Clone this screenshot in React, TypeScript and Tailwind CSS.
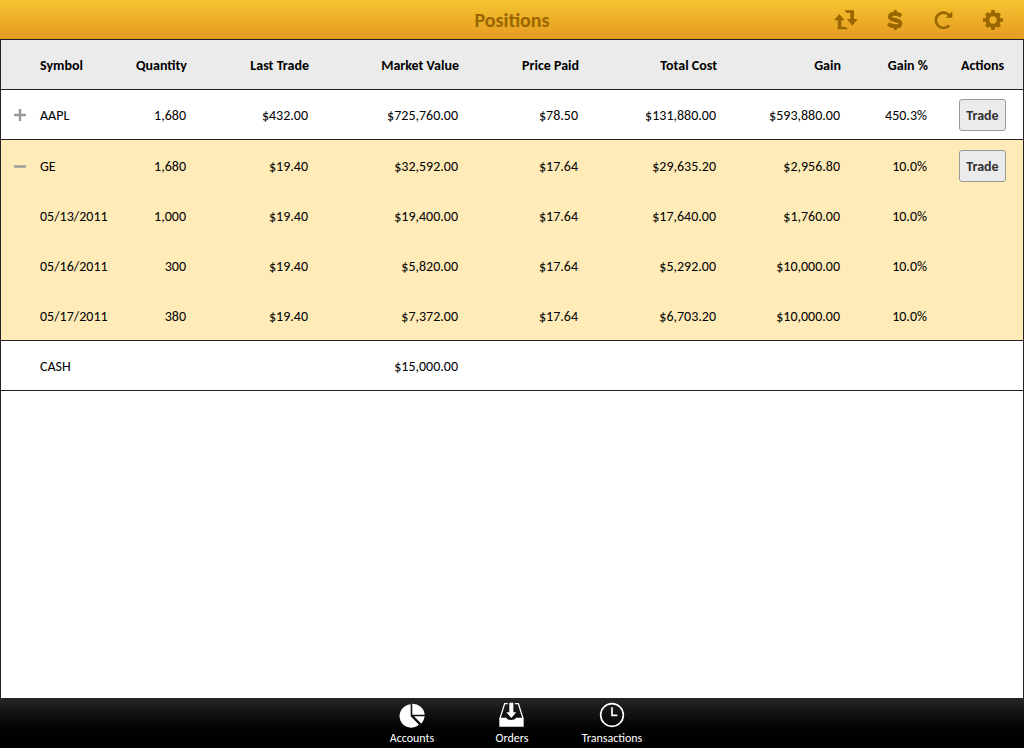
import { useState, type ReactNode } from "react";

type Lot = {
  name: string;
  values: string[];
};

type Position = Lot & {
  tradable: boolean;
  lots?: Lot[];
};

const columns = ["Quantity", "Last Trade", "Market Value", "Price Paid", "Total Cost", "Gain", "Gain %"];

const positions: Position[] = [
  {
    name: "AAPL",
    values: ["1,680", "$432.00", "$725,760.00", "$78.50", "$131,880.00", "$593,880.00", "450.3%"],
    tradable: true,
    lots: [],
  },
  {
    name: "GE",
    values: ["1,680", "$19.40", "$32,592.00", "$17.64", "$29,635.20", "$2,956.80", "10.0%"],
    tradable: true,
    lots: [
      { name: "05/13/2011", values: ["1,000", "$19.40", "$19,400.00", "$17.64", "$17,640.00", "$1,760.00", "10.0%"] },
      { name: "05/16/2011", values: ["300", "$19.40", "$5,820.00", "$17.64", "$5,292.00", "$10,000.00", "10.0%"] },
      { name: "05/17/2011", values: ["380", "$19.40", "$7,372.00", "$17.64", "$6,703.20", "$10,000.00", "10.0%"] },
    ],
  },
  {
    name: "CASH",
    values: ["", "", "$15,000.00", "", "", "", ""],
    tradable: false,
  },
];

function SwapIcon() {
  return (
    <svg viewBox="0 0 72 60" className="h-5 w-6" fill="currentColor" aria-hidden="true">
      <path d="M16 12 32 31H22V50H34L42 58H11V31H0Z" />
      <path d="M31 1H60V27H71L55 47 39 27H49V9H38Z" />
    </svg>
  );
}

function DollarIcon() {
  return (
    <svg viewBox="0 0 48 60" className="h-5 w-4" fill="none" stroke="currentColor" aria-hidden="true">
      <path d="M43 17C36 13 30 11 24 11C15 11 9 14 9 20C9 26 15 28 24 30C34 32 40 35 40 41C40 47 33 49 25 49C17 49 10 47 3 42" strokeWidth="12" />
      <path d="M25 0V12M25 49V60" strokeWidth="9" />
    </svg>
  );
}

function RefreshIcon() {
  return (
    <svg viewBox="0 0 60 60" className="size-5" fill="none" stroke="currentColor" aria-hidden="true">
      <path d="M46 16A23 23 0 1 0 46 46" strokeWidth="8" />
      <path d="M55 4V23H35Z" fill="currentColor" stroke="none" />
    </svg>
  );
}

function GearIcon() {
  return (
    <svg viewBox="0 0 60 60" className="size-5" fill="none" stroke="currentColor" aria-hidden="true">
      <circle cx="30" cy="30" r="17" strokeWidth="12" />
      <path d="M30 0V10M30 50V60M0 30H10M50 30H60M10 10 17 17M43 43 50 50M10 50 17 43M43 17 50 10" strokeWidth="11" />
    </svg>
  );
}

function PieIcon() {
  return (
    <svg viewBox="0 0 81 78" className="h-[26px] w-[27px]" fill="currentColor" aria-hidden="true">
      <path d="M35 7A35 35 0 1 0 60 68L35 43Z" />
      <path d="M40 5A36 36 0 0 1 77 38H40Z" />
      <path d="M45 43H77A36 36 0 0 1 67 65Z" />
    </svg>
  );
}

function TrayIcon() {
  return (
    <svg viewBox="0 0 78 78" className="size-[26px]" fill="currentColor" aria-hidden="true">
      <path d="M1 47H22C25 56 48 56 51 47H74V74H1Z" />
      <path d="M26 5H17L3 49M48 5H58L72 49" fill="none" stroke="currentColor" strokeWidth="4" />
      <path d="M31 2H43V31H52L37 48 22 31H31Z" />
    </svg>
  );
}

function ClockIcon() {
  return (
    <svg viewBox="0 0 78 78" className="size-[26px]" fill="none" stroke="currentColor" strokeWidth="5" aria-hidden="true">
      <circle cx="39" cy="39" r="34" />
      <path d="M39 16V40H55" />
    </svg>
  );
}

function ToolButton({ label, children }: { label: string; children: ReactNode }) {
  return (
    <button type="button" aria-label={label} className="flex h-6 w-6 cursor-pointer items-center justify-center">
      {children}
    </button>
  );
}

function NavLink({ label, children }: { label: string; children: ReactNode }) {
  return (
    <a href="#" className="flex w-[100px] flex-col items-center gap-0.5 pt-1">
      {children}
      <span className="text-xs leading-4">{label}</span>
    </a>
  );
}

function ValueCells({ values, line }: { values: string[]; line: string }) {
  return (
    <>
      {values.map((value, i) => (
        <td key={i} className={`pt-0.5 pr-px text-right ${line}`}>
          {value}
        </td>
      ))}
    </>
  );
}

function PositionRows({ position, initiallyOpen }: { position: Position; initiallyOpen: boolean }) {
  const [open, setOpen] = useState(initiallyOpen);
  const lots = open && position.lots ? position.lots : [];
  const rule = "border-b border-[#222]";
  const line = lots.length ? "" : rule;

  return (
    <tbody className={open ? "bg-[#feebb8]" : "bg-white"}>
      <tr className={open ? "h-[51px]" : "h-[50px]"}>
        <td className={`pr-px ${line}`}>
          {position.lots && (
            <button
              type="button"
              aria-label={`${open ? "Collapse" : "Expand"} ${position.name}`}
              aria-expanded={open}
              onClick={() => setOpen(!open)}
              className="mx-auto flex size-5 cursor-pointer items-center justify-center text-[#999]"
            >
              <svg viewBox="0 0 12 12" className="size-3" stroke="currentColor" strokeWidth="2.4" aria-hidden="true">
                <path d={open ? "M0 6.5H12" : "M0 6H12M6 0V12"} />
              </svg>
            </button>
          )}
        </td>
        <th scope="row" className={`pt-0.5 text-left font-normal ${line}`}>
          {position.name}
        </th>
        <ValueCells values={position.values} line={line} />
        <td className={`pl-3.5 text-center ${line}`}>
          {position.tradable && (
            <button
              type="button"
              className="h-8 w-[47px] cursor-pointer rounded-[3px] border border-[#999] bg-[#ebebeb] pt-0.5 align-middle font-bold text-[#333]"
            >
              Trade
            </button>
          )}
        </td>
      </tr>
      {lots.map((lot, i) => {
        const lotLine = i === lots.length - 1 ? rule : "";
        return (
          <tr key={lot.name} className="h-[50px]">
            <td className={lotLine} />
            <th scope="row" className={`pt-0.5 text-left font-normal ${lotLine}`}>
              {lot.name}
            </th>
            <ValueCells values={lot.values} line={lotLine} />
            <td className={lotLine} />
          </tr>
        );
      })}
    </tbody>
  );
}

export default function App() {
  return (
    <div className="flex min-h-screen flex-col bg-white font-[Carlito,Lato,sans-serif] text-sm leading-4 text-black">
      <header className="grid h-10 grid-cols-[1fr_auto_1fr] items-center border-b border-[#222] bg-linear-to-b from-[#f4c430] to-[#e69a21] text-[#996600]">
        <h1 className="col-start-2 text-xl font-bold">Positions</h1>
        <div className="flex justify-end gap-[25px] pr-[19px]">
          <ToolButton label="Transfer">
            <SwapIcon />
          </ToolButton>
          <ToolButton label="Trade">
            <DollarIcon />
          </ToolButton>
          <ToolButton label="Refresh">
            <RefreshIcon />
          </ToolButton>
          <ToolButton label="Settings">
            <GearIcon />
          </ToolButton>
        </div>
      </header>

      <main className="flex-1 border-x border-[#222]">
        <table className="w-full table-fixed border-separate border-spacing-0">
          <colgroup>
            <col className="w-[39px]" />
            <col className="w-[80px]" />
            <col className="w-[67px]" />
            <col className="w-[122px]" />
            <col className="w-[150px]" />
            <col className="w-[120px]" />
            <col className="w-[138px]" />
            <col className="w-[124px]" />
            <col className="w-[87px]" />
            <col className="w-[95px]" />
          </colgroup>
          <thead className="bg-[#ebebeb]">
            <tr className="h-[50px]">
              <td className="border-b border-[#222]" />
              <th scope="col" className="border-b border-[#222] pt-0.5 text-left">
                Symbol
              </th>
              {columns.map((name) => (
                <th key={name} scope="col" className="border-b border-[#222] pt-0.5 text-right">
                  {name}
                </th>
              ))}
              <th scope="col" className="border-b border-[#222] pt-0.5 pl-3.5 text-center">
                Actions
              </th>
            </tr>
          </thead>
          {positions.map((position) => (
            <PositionRows key={position.name} position={position} initiallyOpen={position.name === "GE"} />
          ))}
        </table>
      </main>

      <footer className="h-[50px] bg-linear-to-b from-[#262626] to-black text-white">
        <nav className="flex justify-center">
          <NavLink label="Accounts">
            <PieIcon />
          </NavLink>
          <NavLink label="Orders">
            <TrayIcon />
          </NavLink>
          <NavLink label="Transactions">
            <ClockIcon />
          </NavLink>
        </nav>
      </footer>
    </div>
  );
}
